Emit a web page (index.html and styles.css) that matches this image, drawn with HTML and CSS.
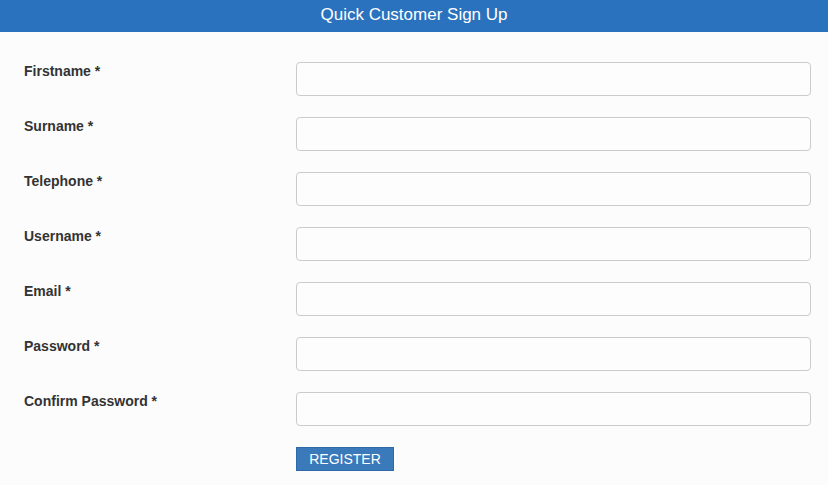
FILE: index.html
```html
<!DOCTYPE html>
<html>
<head>
<meta charset="utf-8">
<link rel="stylesheet" href="styles.css">
</head>
<body>
<div class="header">Quick Customer Sign Up</div>
<form class="form">
  <div class="row"><label class="label">Firstname *</label><input class="input" type="text"></div>
  <div class="row"><label class="label">Surname *</label><input class="input" type="text"></div>
  <div class="row"><label class="label">Telephone *</label><input class="input" type="text"></div>
  <div class="row"><label class="label">Username *</label><input class="input" type="text"></div>
  <div class="row"><label class="label">Email *</label><input class="input" type="text"></div>
  <div class="row"><label class="label">Password *</label><input class="input" type="password"></div>
  <div class="row"><label class="label">Confirm Password *</label><input class="input" type="password"></div>
  <div class="row"><span class="label"></span><button class="button" type="button">REGISTER</button></div>
</form>
</body>
</html>
```
FILE: styles.css
```css
html, body {
  margin: 0;
  padding: 0;
  background: #fcfcfc;
  font-family: "Liberation Sans", Arial, sans-serif;
}
.header {
  height: 32px;
  line-height: 30px;
  background: #2a72bd;
  color: #fff;
  text-align: center;
  font-size: 17px;
}
.form {
  display: flex;
  flex-direction: column;
  gap: 21px;
  padding: 30px 17px 0 24px;
}
.row {
  display: flex;
  align-items: flex-start;
}
.label {
  width: 272px;
  flex: none;
  font-size: 14px;
  font-weight: bold;
  line-height: 18px;
  color: #333;
}
.input {
  box-sizing: border-box;
  width: 515px;
  height: 34px;
  margin: 0;
  border: 1px solid #cbcbcb;
  border-radius: 4px;
  background: #fdfdfd;
  padding: 6px 12px;
  font-size: 14px;
  font-family: inherit;
}
.button {
  box-sizing: border-box;
  width: 98px;
  height: 24px;
  margin: 0;
  padding: 0;
  border: 1px solid #2f69a8;
  border-radius: 0;
  background: #3a79ba;
  color: #fff;
  font-family: inherit;
  font-size: 14px;
  line-height: 22px;
}
```
